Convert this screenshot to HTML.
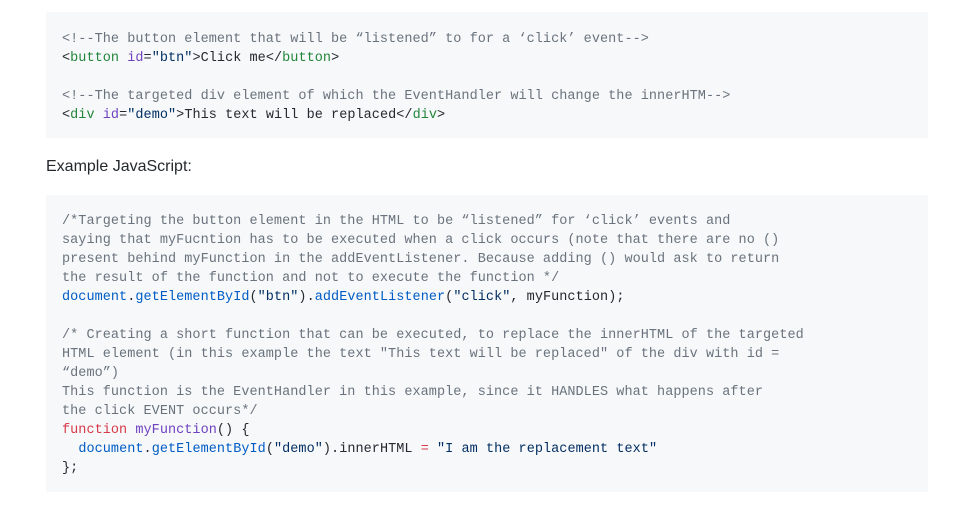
<!DOCTYPE html>
<html><head><meta charset="utf-8"><style>
body{margin:0;background:#fff;width:970px;height:520px;overflow:hidden;font-family:"Liberation Sans",sans-serif;}
pre{position:absolute;left:46px;width:850px;margin:0;background:#f6f8fa;padding:16px 16px;font-family:"Liberation Mono",monospace;font-size:13.5px;letter-spacing:0.05px;line-height:19px;color:#24292e;white-space:pre;}
.c{color:#6a737d}.t{color:#22863a}.a{color:#6f42c1}.k{color:#d73a49}.b{color:#005cc5}.s{color:#032f62}
h{position:absolute;left:46px;top:158px;font-size:16px;color:#24292e;}
</style></head><body>
<pre style="top:12px;height:94px;padding-top:18px;padding-bottom:14px"><span class="c">&lt;!--The button element that will be “listened” to for a ‘click’ event--&gt;</span>
&lt;<span class="t">button</span> <span class="a">id</span>=<span class="s">"btn"</span>&gt;Click me&lt;/<span class="t">button</span>&gt;

<span class="c">&lt;!--The targeted div element of which the EventHandler will change the innerHTM--&gt;</span>
&lt;<span class="t">div</span> <span class="a">id</span>=<span class="s">"demo"</span>&gt;This text will be replaced&lt;/<span class="t">div</span>&gt;</pre>
<h>Example JavaScript:</h>
<pre style="top:195px;height:267px;padding-top:16.5px;padding-bottom:13.5px"><span class="c">/*Targeting the button element in the HTML to be “listened” for ‘click’ events and
saying that myFucntion has to be executed when a click occurs (note that there are no ()
present behind myFunction in the addEventListener. Because adding () would ask to return
the result of the function and not to execute the function */</span>
<span class="b">document</span>.<span class="b">getElementById</span>(<span class="s">"btn"</span>).<span class="b">addEventListener</span>(<span class="s">"click"</span>, myFunction);

<span class="c">/* Creating a short function that can be executed, to replace the innerHTML of the targeted
HTML element (in this example the text "This text will be replaced" of the div with id =
“demo”)
This function is the EventHandler in this example, since it HANDLES what happens after
the click EVENT occurs*/</span>
<span class="k">function</span> <span class="a">myFunction</span>() {
  <span class="b">document</span>.<span class="b">getElementById</span>(<span class="s">"demo"</span>).innerHTML <span class="k">=</span> <span class="s">"I am the replacement text"</span>
};</pre>
</body></html>
